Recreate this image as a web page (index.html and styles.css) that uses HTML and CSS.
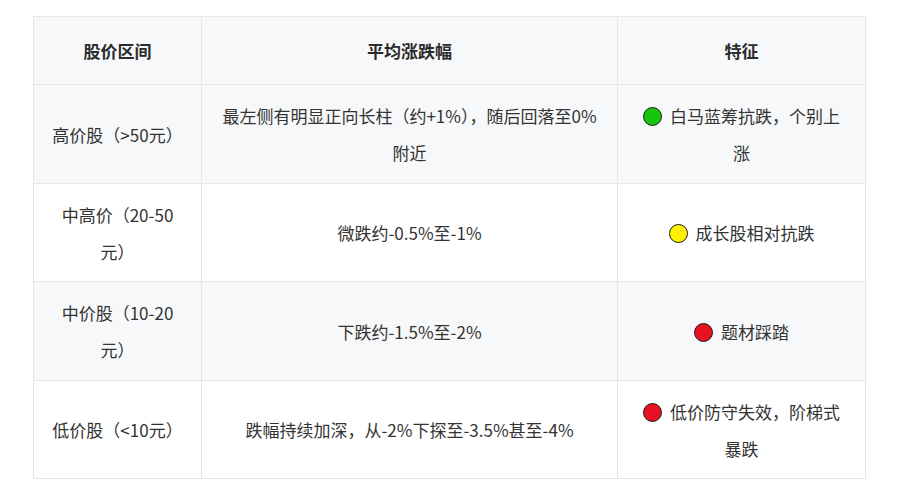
FILE: index.html
```html
<!DOCTYPE html>
<html lang="zh-CN">
<head>
<meta charset="utf-8">
<title>股价区间</title>
<link rel="stylesheet" href="styles.css">
</head>
<body>
<div class="wrap">
<table class="data">
  <colgroup>
    <col class="c1">
    <col class="c2">
    <col class="c3">
  </colgroup>
  <thead>
    <tr><th>股价区间</th><th>平均涨跌幅</th><th>特征</th></tr>
  </thead>
  <tbody>
    <tr class="alt">
      <td>高价股（&gt;50元）</td>
      <td>最左侧有明显正向长柱（约+1%），随后回落至0%附近</td>
      <td class="feat"><span class="dot green"></span>白马蓝筹抗跌，个别上涨</td>
    </tr>
    <tr>
      <td>中高价（20-50元）</td>
      <td>微跌约-0.5%至-1%</td>
      <td class="feat"><span class="dot yellow"></span>成长股相对抗跌</td>
    </tr>
    <tr class="alt">
      <td>中价股（10-20元）</td>
      <td>下跌约-1.5%至-2%</td>
      <td class="feat"><span class="dot red"></span>题材踩踏</td>
    </tr>
    <tr>
      <td>低价股（&lt;10元）</td>
      <td>跌幅持续加深，从-2%下探至-3.5%甚至-4%</td>
      <td class="feat"><span class="dot red"></span>低价防守失效，阶梯式暴跌</td>
    </tr>
  </tbody>
</table>
</div>
</body>
</html>
```
FILE: styles.css
```css
html, body {
  margin: 0;
  padding: 0;
  background: #ffffff;
}
body {
  font-family: "Noto Sans CJK SC", "Noto Sans", sans-serif;
  color: #333333;
  font-size: 17px;
}
.wrap {
  padding: 16px 0 0 33px;
}
.data {
  border-collapse: collapse;
  table-layout: fixed;
  width: 832px;
}
.c1 { width: 168px; }
.c2 { width: 416px; }
.c3 { width: 248px; }
.data th,
.data td {
  border: 1px solid #e4e6ea;
  text-align: center;
  vertical-align: middle;
  line-height: 37px;
  padding: 12px 16px 11.5px;
}
.data th {
  background: #f7f8fa;
  font-weight: 700;
  padding: 15px 16px;
  color: #2b2b2b;
}
.data tr.alt td {
  background: #f7f8fa;
}
.data td.feat {
  padding-left: 18px;
  padding-right: 18px;
}
.dot {
  display: inline-block;
  width: 17px;
  height: 17px;
  border-radius: 50%;
  border: 1px solid #1c1c1c;
  margin-right: 8px;
  vertical-align: -3px;
}
.green { background: #16c60c; }
.yellow { background: #fff100; }
.red { background: #e81224; }
```
